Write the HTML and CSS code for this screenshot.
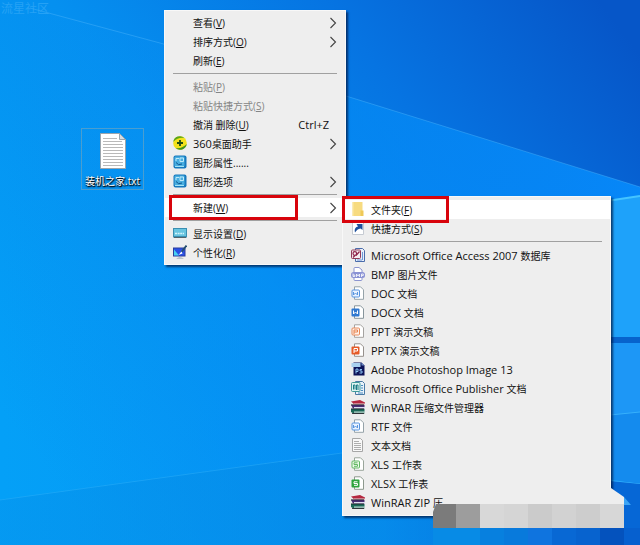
FILE: index.html
```html
<!DOCTYPE html>
<html lang="zh-CN">
<head>
    <meta charset="UTF-8">
    <meta name="viewport" content="width=device-width, initial-scale=1.0">
    <title>桌面</title>
    <link rel="stylesheet" href="styles.css">
</head>
<body>
    <!-- Icon shapes shared by the menus -->
    <svg class="sprite" aria-hidden="true">
        <defs>
            <symbol id="chevron" viewBox="0 0 8 12"><path d="M1.5 1 L6.5 6 L1.5 11" fill="none" stroke="#444" stroke-width="1.1"/></symbol>
            <symbol id="i360" viewBox="0 0 14 14">
                <circle cx="7" cy="7" r="6.8" fill="#f3e21c"/>
                <path d="M.2 6 A6.8 6.8 0 0 1 11.500 2 Q5 1 .2 6Z" fill="#58a51b"/>
                <path d="M13.800 8 A6.8 6.8 0 0 1 2.500 12 Q9 13 13.800 8Z" fill="#3f9420"/>
                <path d="M7 4v6M4 7h6" stroke="#1d4d16" stroke-width="1.8"/>
            </symbol>
            <symbol id="intel" viewBox="0 0 14 14">
                <rect x=".5" y=".5" width="13" height="13" rx="2" fill="#1679bd"/>
                <rect x="1.5" y="1.5" width="10" height="10" rx="1" fill="#48aee0"/>
                <path d="M3 6V3.500h3M7 3h3.500v3.500H7z" fill="none" stroke="#bdeafa"/>
                <path d="M3 7.500q2 3.500 6 1.500" fill="none" stroke="#0c558e"/>
                <path d="M2 11.500h9" stroke="#a5e4f5"/>
            </symbol>
            <symbol id="display" viewBox="0 0 14 14">
                <rect x="0" y="2" width="14" height="9.500" fill="#3a8fb2"/>
                <rect x="1" y="3" width="12" height="7" fill="#68c5e0"/>
                <path d="M2 7.500h9" stroke="#d3f4fb" stroke-width="1.500" stroke-dasharray="2 .6"/>
                <path d="M1 11.500h12" stroke="#54656c"/>
            </symbol>
            <symbol id="personal" viewBox="0 0 14 14">
                <rect x="0" y="2.500" width="12.500" height="9" fill="#2b3d9c"/>
                <rect x="1" y="3.500" width="10.500" height="7" fill="#2a50e6"/>
                <path d="M1 4.500l5 6H1z" fill="#47d2f2"/>
                <path d="M13.500 .5L8.500 7" stroke="#234e70" stroke-width="1.800"/>
                <path d="M8.500 6.500l-3 3.500 4-1.500z" fill="#fff"/>
                <path d="M3 13.500q4-2 8 0z" fill="#8797a5"/>
            </symbol>
            <symbol id="folder" viewBox="0 0 14 14">
                <path d="M1.500 0h10v14h-10z" fill="#f7db80"/>
                <path d="M9.500 8.500h3v5.500h-3z" fill="#efc958"/>
                <path d="M2 0v14" stroke="#fbe9a8"/>
            </symbol>
            <symbol id="shortcut" viewBox="0 0 14 14">
                <path d="M1.500 .5h11v13h-11z" fill="#fff" stroke="#c6cbd2"/>
                <path d="M4 11.500c-1-4 1-5.500 3-6L5.500 3h6v6L9.500 7.500C7 8 5.500 9 4 11.500z" fill="#1d4f9b"/>
            </symbol>
            <symbol id="access" viewBox="0 0 14 14">
                <path d="M4.500 .5h7l2 2v11h-9z" fill="#e8effa" stroke="#4a6cab"/>
                <path d="M11.500 4v8M6 12h5" stroke="#6f98d6"/>
                <rect x=".5" y="2" width="9" height="8.500" rx="1" fill="#f6edf1" stroke="#8f3a58"/>
                <circle cx="3.800" cy="5.500" r="1.800" fill="none" stroke="#8f2349" stroke-width="1.200"/>
                <path d="M5 7.500l3.500-4M2 9.500l2-2" stroke="#8f2349" stroke-width="1.200"/>
            </symbol>
            <symbol id="bmp" viewBox="0 0 14 14">
                <path d="M3 6v-4.500q0-1 1-1h4l3 2.500v3" fill="#fff" stroke="#8b94cf"/>
                <rect x="0" y="5" width="14" height="6" rx="2.500" fill="#8b93d4"/>
                <path d="M2 6.500v3h1.800v-1.500H2M5.500 10V7l1.500 2 1.500-2v3M10.500 10V7h1.800v1.500h-1.800" fill="none" stroke="#fff" stroke-width=".8"/>
                <path d="M3 11v1.500q0 1 1 1h6q1 0 1-1V11" fill="#fff" stroke="#8b94cf"/>
            </symbol>
            <!-- sheet with a coloured app badge: pale for the old formats, solid for the new -->
            <symbol id="w-old" viewBox="0 0 14 14">
                <path d="M3.500 .8h6l3 3v9.500h-9z" fill="#fff" stroke="#96a3a9"/>
                <rect x="1" y="4" width="7.500" height="7" rx="1" fill="#eaf3ff" stroke="#5895df"/>
                <path d="M2.500 6v3l2-2 2 2V6" fill="none" stroke="#5895df"/>
            </symbol>
            <symbol id="w-new" viewBox="0 0 14 14">
                <path d="M3.500 .8h6l3 3v9.500h-9z" fill="#fff" stroke="#87959c"/>
                <rect x=".5" y="3.500" width="8" height="8" rx="1" fill="#2f78d0"/>
                <path d="M2.500 5.500v3.500l2-2 2 2V5.500" fill="none" stroke="#fff"/>
            </symbol>
            <symbol id="p-old" viewBox="0 0 14 14">
                <path d="M3.500 .8h6l3 3v9.500h-9z" fill="#fff" stroke="#a5a3a1"/>
                <rect x="1" y="4" width="7.500" height="7" rx="1" fill="#fff1e9" stroke="#e88a5a"/>
                <path d="M3 10V6h3.500v2H3" fill="none" stroke="#e8834f"/>
            </symbol>
            <symbol id="p-new" viewBox="0 0 14 14">
                <path d="M3.500 .8h6l3 3v9.500h-9z" fill="#fff" stroke="#97918d"/>
                <rect x=".5" y="3.500" width="8" height="8" rx="1" fill="#e65a26"/>
                <path d="M3 10V5.500h3.500v2.500H3" fill="none" stroke="#fff"/>
            </symbol>
            <symbol id="s-old" viewBox="0 0 14 14">
                <path d="M3.500 .8h6l3 3v9.500h-9z" fill="#fff" stroke="#9aa69b"/>
                <rect x="1" y="4" width="7.500" height="7" rx="1" fill="#eefaec" stroke="#62b862"/>
                <path d="M6.500 5.800H3v1.700h3.500v1.800H3" fill="none" stroke="#62b862"/>
            </symbol>
            <symbol id="s-new" viewBox="0 0 14 14">
                <path d="M3.500 .8h6l3 3v9.500h-9z" fill="#fff" stroke="#8d998e"/>
                <rect x=".5" y="3.500" width="8" height="8" rx="1" fill="#2da33c"/>
                <path d="M6.500 5.800H3v1.700h3.500v1.800H3" fill="none" stroke="#fff"/>
            </symbol>
            <symbol id="ps" viewBox="0 0 14 14">
                <path d="M2.500 .5h8l3 3v10h-11z" fill="#0c1358"/>
                <path d="M.5 1h9v4h-9z" fill="#a9d0ef"/>
                <path d="M10.500 .5v3h3z" fill="#6d8cc8"/>
                <path d="M5 11.500V7h2v2.500H5M11 7.500H9v1.500h2v2H8.500" fill="none" stroke="#8fc6f5"/>
            </symbol>
            <symbol id="publisher" viewBox="0 0 14 14">
                <path d="M4.500 .5h7l2 2v11h-9z" fill="#e9f2fa" stroke="#4b7aa5"/>
                <path d="M10 4.500h2M10 7h2M10 9.500h2M7 12h5" stroke="#4b8bc0"/>
                <rect x=".5" y="1.500" width="8.500" height="9" rx="1" fill="#dff4f1" stroke="#3f9a9a"/>
                <path d="M2.500 8.500V4h1.500v4.500M5.500 9V4H7v5" fill="none" stroke="#1b7d85"/>
            </symbol>
            <symbol id="rar" viewBox="0 0 14 14">
                <path d="M0 1.500L9 0l5 2.500v2L4 5z" fill="#b5283f"/>
                <path d="M3 3.500h11v1.300H3z" fill="#eadde0"/>
                <path d="M0 5h13.500v3.500H2z" fill="#4b2d74"/>
                <path d="M3 7h11v1.500H3z" fill="#dfe0f2"/>
                <path d="M0 9h13.500v4.500H2.500L0 12z" fill="#1b6958"/>
                <path d="M3 11.500h11v1.200H3z" fill="#c6ddd6"/>
                <path d="M0 4.800h13M0 8.900h13M1 13.500h12" stroke="#1b1620" stroke-width=".8"/>
            </symbol>
            <symbol id="text" viewBox="0 0 14 14">
                <path d="M1.500 .5h8l2 2v11h-10z" fill="#f8f8f8" stroke="#a6a6a6"/>
                <path d="M3 3.500h5M3 5.500h7M3 7.500h7M3 9.500h7M3 11.500h7" stroke="#aeaeae"/>
            </symbol>
        </defs>
    </svg>

    <main class="desktop">
        <svg class="wallpaper" viewBox="0 0 640 545" preserveAspectRatio="none" aria-hidden="true">
            <defs>
                <linearGradient id="base" x1="0" y1=".75" x2="1" y2=".1">
                    <stop offset="0" stop-color="#04a0f7"/>
                    <stop offset=".4" stop-color="#0590f0"/>
                    <stop offset=".7" stop-color="#0674e2"/>
                    <stop offset="1" stop-color="#0656c8"/>
                </linearGradient>
                <linearGradient id="beam" x1="0" y1="0" x2="1" y2="0">
                    <stop offset="0" stop-color="#0a93f2" stop-opacity="0"/>
                    <stop offset=".5" stop-color="#048cf6" stop-opacity=".6"/>
                    <stop offset="1" stop-color="#0787f8"/>
                </linearGradient>
                <linearGradient id="floor" x1="0" y1="0" x2="1" y2="0">
                    <stop offset="0" stop-color="#0595ee"/>
                    <stop offset=".6" stop-color="#0688e4"/>
                    <stop offset="1" stop-color="#0757c4"/>
                </linearGradient>
            </defs>
            <rect width="640" height="545" fill="url(#base)"/>
            <path d="M30 8L160 43L346 96L640 187V545H0V0z" fill="url(#beam)"/>
            <path d="M30 8L160 43L346 96L640 187" fill="none" stroke="#4bb4fb" stroke-opacity=".45"/>
            <path d="M0 500L342 453L640 420V545H0z" fill="url(#floor)" fill-opacity=".6"/>
            <path d="M0 500L342 453" stroke="#38b3fb" stroke-opacity=".4"/>
            <path d="M600 202L640 196V545H600z" fill="#1ea2fa"/>
            <path d="M600 202L640 196" stroke="#45c4ff" stroke-width="2"/>
            <path d="M600 337h40v6h-40z" fill="#0763cc"/>
            <path d="M600 343h40v69l-40 4z" fill="#1d97f6"/>
            <path d="M600 416l40-4v72l-40-6z" fill="#148bee"/>
            <path d="M600 416l40-4M600 480l40 4" stroke="#37b0fb"/>
            <path d="M600 480l40 4v61h-40z" fill="#0667d6"/>
        </svg>

        <span class="watermark">流星社区</span>

        <a class="shortcut" href="#">
            <svg viewBox="0 0 26 36" aria-hidden="true">
                <path d="M.5 .5h19l6 6v29H.5z" fill="#fff" stroke="#9ba5ad"/>
                <path d="M19.500 .5v6h6z" fill="#d5dde3" stroke="#9ba5ad"/>
                <path d="M3 5.500h14M3 8.500h19M3 11.500h20M3 14.500h20M3 17.500h20M3 20.500h20M3 23.500h20M3 26.500h20M3 29.500h20M3 32.500h20" stroke="#b9b9b9"/>
            </svg>
            <span>装机之家.txt</span>
        </a>

        <ul class="menu context-menu">
            <li><button>查看(<u>V</u>)<svg class="arrow"><use href="#chevron"/></svg></button></li>
            <li><button>排序方式(<u>O</u>)<svg class="arrow"><use href="#chevron"/></svg></button></li>
            <li><button>刷新(<u>E</u>)</button></li>
            <li class="separator"></li>
            <li><button disabled>粘贴(<u>P</u>)</button></li>
            <li><button disabled>粘贴快捷方式(<u>S</u>)</button></li>
            <li><button>撤消 删除(<u>U</u>)<kbd>Ctrl+Z</kbd></button></li>
            <li><button><svg class="icon"><use href="#i360"/></svg><span class="latin">360</span>桌面助手<svg class="arrow"><use href="#chevron"/></svg></button></li>
            <li><button><svg class="icon"><use href="#intel"/></svg>图形属性......</button></li>
            <li><button><svg class="icon"><use href="#intel"/></svg>图形选项<svg class="arrow"><use href="#chevron"/></svg></button></li>
            <li class="separator"></li>
            <li class="open">
                <button class="active">新建(<u>W</u>)<svg class="arrow"><use href="#chevron"/></svg></button>
                <span class="mark mark-new"></span>
                <ul class="menu submenu">
                    <li>
                        <button class="active"><svg class="icon"><use href="#folder"/></svg>文件夹(<u>F</u>)</button>
                        <span class="mark mark-folder"></span>
                    </li>
                    <li><button><svg class="icon"><use href="#shortcut"/></svg>快捷方式(<u>S</u>)</button></li>
                    <li class="separator"></li>
                    <li><button><svg class="icon"><use href="#access"/></svg><span class="latin">Microsoft Office Access 2007 </span>数据库</button></li>
                    <li><button><svg class="icon"><use href="#bmp"/></svg><span class="latin">BMP </span>图片文件</button></li>
                    <li><button><svg class="icon"><use href="#w-old"/></svg><span class="latin">DOC </span>文档</button></li>
                    <li><button><svg class="icon"><use href="#w-new"/></svg><span class="latin">DOCX </span>文档</button></li>
                    <li><button><svg class="icon"><use href="#p-old"/></svg><span class="latin">PPT </span>演示文稿</button></li>
                    <li><button><svg class="icon"><use href="#p-new"/></svg><span class="latin">PPTX </span>演示文稿</button></li>
                    <li><button><svg class="icon"><use href="#ps"/></svg><span class="latin">Adobe Photoshop Image 13</span></button></li>
                    <li><button><svg class="icon"><use href="#publisher"/></svg><span class="latin">Microsoft Office Publisher </span>文档</button></li>
                    <li><button><svg class="icon"><use href="#rar"/></svg><span class="latin">WinRAR </span>压缩文件管理器</button></li>
                    <li><button><svg class="icon"><use href="#w-old"/></svg><span class="latin">RTF </span>文件</button></li>
                    <li><button><svg class="icon"><use href="#text"/></svg>文本文档</button></li>
                    <li><button><svg class="icon"><use href="#s-old"/></svg><span class="latin">XLS </span>工作表</button></li>
                    <li><button><svg class="icon"><use href="#s-new"/></svg><span class="latin">XLSX </span>工作表</button></li>
                    <li><button><svg class="icon"><use href="#rar"/></svg><span class="latin">WinRAR ZIP </span>压</button></li>
                </ul>
            </li>
            <li class="separator"></li>
            <li><button><svg class="icon"><use href="#display"/></svg>显示设置(<u>D</u>)</button></li>
            <li><button><svg class="icon"><use href="#personal"/></svg>个性化(<u>R</u>)</button></li>
        </ul>

        <!-- pixelated strip over the lower right corner -->
        <svg class="mosaic" viewBox="0 0 207 57" aria-hidden="true">
            <path d="M170 0h8l13 9v9h-21z" fill="#eee"/>
            <path d="M191 9l7 8h-7z" fill="#3ba4f5"/>
            <path d="M0 40V24l3-8h20v24z" fill="#7b7b7b"/>
            <path d="M23 16h24v24H23z" fill="#9d9d9d"/>
            <path d="M47 16h24v24H47z" fill="#d8d8d8"/>
            <path d="M71 16h24v24H71z" fill="#d5d5d5"/>
            <path d="M95 16h24v24H95z" fill="#cbcbcb"/>
            <path d="M119 16h24v24h-24z" fill="#d2d2d2"/>
            <path d="M143 16h24v24h-24z" fill="#cdcdcd"/>
            <path d="M167 16h24v24h-24z" fill="#d7d7d7"/>
            <path d="M0 40h47v17H0z" fill="#078be6"/>
            <path d="M47 40h24v17H47z" fill="#0780df"/>
            <path d="M71 40h24v17H71z" fill="#087adc"/>
            <path d="M95 40h24v17H95z" fill="#0f74df"/>
            <path d="M119 40h24v17h-24z" fill="#0868d4"/>
            <path d="M143 40h24v17h-24z" fill="#0763cf"/>
            <path d="M167 40h24v17h-24z" fill="#0452bd"/>
            <path d="M191 40h16v17h-16z" fill="#0660cf"/>
        </svg>
    </main>
</body>
</html>
```
FILE: styles.css
```css
* { box-sizing: border-box; }
body {
    margin: 0;
    font-family: "Open Sans", "Noto Sans CJK SC", sans-serif;
    font-size: 10px;
    color: #111;
}
.sprite { position: absolute; width: 0; height: 0; }
.desktop {
    position: relative;
    min-height: 100vh;
    overflow: hidden;
    background: #0592f1;
}
.wallpaper {
    position: absolute;
    inset: 0;
    width: 100%;
    height: 100%;
}
.watermark {
    position: absolute;
    left: 1px;
    top: 0;
    font-size: 12px;
    line-height: 18px;
    color: #45b3fa;
    opacity: 0.5;
}

/* Desktop file */
.shortcut {
    position: absolute;
    left: 81px;
    top: 128px;
    display: flex;
    flex-direction: column;
    align-items: center;
    gap: 4px;
    padding: 4px 3px 0;
    border: 1px solid #4a9ed0;
    color: #fff;
    text-decoration: none;
    line-height: 16px;
    white-space: nowrap;
    text-shadow: 0 1px 2px #000, 1px 1px 1px #000;
}
.shortcut svg { width: 26px; height: 36px; }

/* Menus */
.menu {
    position: absolute;
    margin: 0;
    padding: 2px 0;
    list-style: none;
    background: #eee;
    border: 1px solid #f8f8f8;
    box-shadow: 2px 2px 2px rgba(0, 20, 60, 0.7);
}
.context-menu {
    left: 164px;
    top: 10px;
    width: 182px;
}
.submenu {
    left: calc(100% - 3px);
    top: -2px;
    width: 269px;
    padding: 3px 0;
}
.open, .submenu li { position: relative; }
.menu button {
    position: relative;
    display: flex;
    align-items: center;
    width: 100%;
    height: 19px;
    padding: 0 12px 0 28px;
    border: 0;
    background: none;
    font: inherit;
    color: inherit;
    text-align: left;
    white-space: pre;
}
.menu button:disabled { color: #858585; }
.menu .active { background: #fff; }
.latin, .menu kbd { font-size: 11px; }
.menu kbd {
    margin-left: auto;
    padding-right: 4px;
    font-family: inherit;
}
.icon {
    position: absolute;
    left: 8px;
    top: 2px;
    width: 14px;
    height: 14px;
}
.arrow {
    width: 8px;
    height: 12px;
    margin-left: auto;
    margin-right: -4px;
}
.separator {
    height: 7px;
    margin: 0 8px;
    padding-top: 3px;
}
.separator::before {
    content: "";
    display: block;
    height: 1px;
    background: #a0a0a0;
}
.submenu .separator { height: 8px; }

/* Red highlight frames */
.mark {
    position: absolute;
    border: 3px solid #d8040c;
    pointer-events: none;
    z-index: 1;
}
.mark-new {
    left: 4px;
    top: -3px;
    width: 129px;
    height: 25px;
}
.mark-folder {
    left: -1px;
    top: -4px;
    width: 107px;
    height: 27px;
}

.mosaic {
    position: absolute;
    right: 0;
    bottom: 0;
    width: 207px;
    height: 57px;
}
```
